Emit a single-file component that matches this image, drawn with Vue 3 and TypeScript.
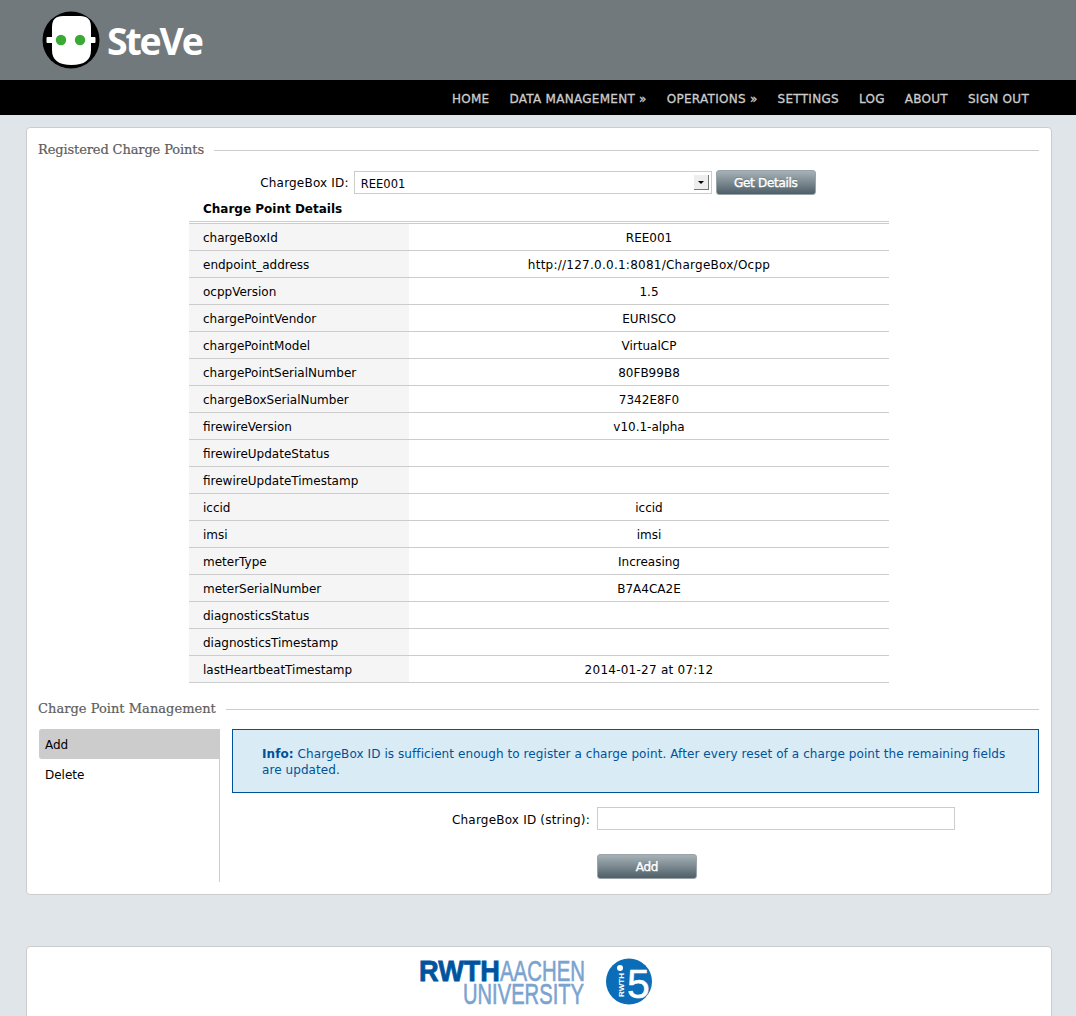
<script setup lang="ts">
const navItems = ['HOME', 'DATA MANAGEMENT »', 'OPERATIONS »', 'SETTINGS', 'LOG', 'ABOUT', 'SIGN OUT']

const details: [string, string][] = [
  ['chargeBoxId', 'REE001'],
  ['endpoint_address', 'http://127.0.0.1:8081/ChargeBox/Ocpp'],
  ['ocppVersion', '1.5'],
  ['chargePointVendor', 'EURISCO'],
  ['chargePointModel', 'VirtualCP'],
  ['chargePointSerialNumber', '80FB99B8'],
  ['chargeBoxSerialNumber', '7342E8F0'],
  ['firewireVersion', 'v10.1-alpha'],
  ['firewireUpdateStatus', ''],
  ['firewireUpdateTimestamp', ''],
  ['iccid', 'iccid'],
  ['imsi', 'imsi'],
  ['meterType', 'Increasing'],
  ['meterSerialNumber', 'B7A4CA2E'],
  ['diagnosticsStatus', ''],
  ['diagnosticsTimestamp', ''],
  ['lastHeartbeatTimestamp', '2014-01-27 at 07:12'],
]
</script>

<template>
  <div class="page">
    <header class="top">
      <svg class="logo" width="60" height="60" viewBox="0 0 60 60">
        <circle cx="30" cy="30" r="28.5" fill="#000" />
        <path d="M11 17 Q11 6 22 6 H39 Q50 6 50 17 V40 Q50 55 30.5 55 Q11 55 11 40 Z" fill="#fff" />
        <rect x="5.5" y="27" width="49" height="6" rx="1" fill="#fff" />
        <circle cx="20" cy="30" r="5.2" fill="#3aaa35" />
        <circle cx="39" cy="30" r="5.2" fill="#3aaa35" />
      </svg>
      <span class="brand">SteVe</span>
    </header>
    <nav class="menu">
      <a v-for="item in navItems" :key="item">{{ item }}</a>
    </nav>

    <main class="card">
      <div class="section-title"><span>Registered Charge Points</span></div>
      <form class="picker" @submit.prevent>
        <label>ChargeBox ID:</label>
        <div class="select-wrap">
          <select><option>REE001</option></select>
          <span class="select-arrow"></span>
        </div>
        <button class="btn" type="button">Get Details</button>
      </form>

      <table class="details">
        <thead>
          <tr><th colspan="2">Charge Point Details</th></tr>
        </thead>
        <tbody>
          <tr v-for="row in details" :key="row[0]">
            <td class="key">{{ row[0] }}</td>
            <td class="val" :class="{ wide: row[1].length > 15 }">{{ row[1] }}</td>
          </tr>
        </tbody>
      </table>

      <div class="section-title second"><span>Charge Point Management</span></div>
      <div class="manage">
        <ul class="side">
          <li class="active">Add</li>
          <li>Delete</li>
        </ul>
        <div class="manage-body">
          <div class="info">
            <b>Info:</b> ChargeBox ID is sufficient enough to register a charge point. After every reset of a charge point the remaining fields are updated.
          </div>
          <form class="add-form" @submit.prevent>
            <label>ChargeBox ID (string):</label>
            <input type="text" />
            <button class="btn" type="button">Add</button>
          </form>
        </div>
      </div>
    </main>

    <footer class="card foot">
      <svg width="240" height="52" viewBox="0 0 240 52">
        <text x="0" y="26" class="rwth" textLength="81" lengthAdjust="spacingAndGlyphs">RWTH</text>
        <text x="81" y="26" class="aachen" textLength="85" lengthAdjust="spacingAndGlyphs">AACHEN</text>
        <text x="44" y="49" class="aachen" textLength="121" lengthAdjust="spacingAndGlyphs">UNIVERSITY</text>
        <circle cx="210" cy="26.5" r="23" fill="#0b6db7" />
        <circle cx="201" cy="13" r="3" fill="#fff" />
        <text x="0" y="0" class="tiny" textLength="24" lengthAdjust="spacingAndGlyphs" transform="translate(205 42) rotate(-90)">RWTH</text>
        <text x="208" y="43" class="five">5</text>
      </svg>
    </footer>
  </div>
</template>

<style>
html, body {
  margin: 0;
  background: #e0e5e9;
  overflow: hidden;
}
</style>

<style scoped>
.page {
  font-family: 'DejaVu Sans', Verdana, sans-serif;
  font-size: 12px;
  color: #000;
  height: 1016px;
  overflow: hidden;
}

.top {
  height: 80px;
  background: #72797c;
  display: flex;
  align-items: center;
  padding-left: 41px;
  box-sizing: border-box;
}
.logo { flex: none; }
.brand {
  font-family: 'Open Sans', sans-serif;
  font-weight: 700;
  font-size: 37.5px;
  color: #fff;
  letter-spacing: -2.2px;
  margin-left: 6px;
}

.menu {
  height: 35px;
  background: #000;
  display: flex;
  justify-content: flex-end;
  align-items: center;
  gap: 20px;
  padding-right: 47px;
  padding-top: 2px;
  box-sizing: border-box;
}
.menu a {
  color: #ccc;
  font-size: 12px;
  letter-spacing: 0.28px;
  -webkit-text-stroke: 0.3px #ccc;
}

.card {
  display: block;
  margin: 12px 24px 0 26px;
  background: #fff;
  border: 1px solid #ccc;
  border-radius: 4px;
  padding: 12px;
  height: 768px;
  box-sizing: border-box;
}

.section-title {
  display: flex;
  align-items: center;
  gap: 10px;
  margin-left: -1px;
  font-family: 'DejaVu Serif', serif;
  font-size: 13px;
  letter-spacing: -0.12px;
  color: #5d5d5d;
  -webkit-text-stroke: 0.2px #5d5d5d;
  line-height: 20px;
}
.section-title::after {
  content: '';
  flex: 1;
  border-top: 1px solid #ccc;
}
.section-title.second {
  margin-top: 16px;
  letter-spacing: 0.03px;
}

.picker {
  display: flex;
  justify-content: center;
  align-items: center;
  gap: 5px;
  margin-top: 10px;
  padding-right: 2px;
}
.picker label, .add-form label { letter-spacing: 0.2px; }
.picker .btn { margin-left: -1px; }
.select-wrap { position: relative; }
.select-wrap select {
  display: block;
  appearance: none;
  width: 358px;
  height: 23px;
  box-sizing: border-box;
  border: 1px solid #ccc;
  background: #fff;
  font: inherit;
  font-size: 11.5px;
  padding: 2px 6px 0;
  color: #000;
  border-radius: 0;
}
.select-arrow {
  position: absolute;
  right: 3px;
  top: 4px;
  width: 15px;
  height: 15px;
  box-sizing: border-box;
  background: #eee;
  border-right: 1px solid #777;
  border-bottom: 1px solid #777;
}
.select-arrow::after {
  content: '';
  position: absolute;
  left: 4px;
  top: 6px;
  border: 3px solid transparent;
  border-top: 3px solid #000;
  border-bottom: 0;
}

.btn {
  width: 100px;
  height: 25px;
  box-sizing: border-box;
  border: 1px solid #9aa3a8;
  border-radius: 3px;
  background: linear-gradient(#a6b2b8, #4f5f67);
  color: #fff;
  font: inherit;
  letter-spacing: -0.3px;
  -webkit-text-stroke: 0.4px #fff;
  text-shadow: 0 -1px 0 rgba(0, 0, 0, 0.25);
  padding: 0;
}

.details {
  width: 700px;
  margin: 0 auto;
  border-collapse: collapse;
}
.details th {
  text-align: left;
  padding: 2px 14px 0;
  height: 24px;
  font-size: 12px;
  border-bottom: 3px double #ccc;
}
.details td {
  height: 27px;
  padding: 2px 0 0;
  box-sizing: border-box;
  border-bottom: 1px solid #ccc;
}
.details tbody tr:first-child td { height: 28px; }
.key {
  width: 220px;
  padding-left: 14px !important;
  background: #f5f5f5;
}
.val { text-align: center; }
.val.wide { letter-spacing: 0.25px; }

.manage {
  display: flex;
  margin-top: 10px;
  gap: 12px;
}
.side {
  list-style: none;
  margin: 0;
  padding: 0;
  width: 181px;
  height: 153px;
  box-sizing: border-box;
  border-right: 1px solid #ccc;
}
.side li {
  height: 30px;
  line-height: 32px;
  padding-left: 6px;
}
.side li.active {
  background: #ccc;
  border-radius: 3px 0 0 3px;
}
.manage-body { flex: 1; }
.info {
  border: 1px solid #00529b;
  background: #d9ebf4;
  color: #00529b;
  padding: 16px 30px 14px 29px;
  line-height: 16px;
  letter-spacing: 0.08px;
}
.add-form {
  display: grid;
  grid-template-columns: 1fr 358px;
  column-gap: 7px;
  row-gap: 24px;
  align-items: center;
  margin-top: 14px;
  padding-right: 84px;
}
.add-form label { text-align: right; padding-top: 2px; }
.add-form input {
  height: 23px;
  box-sizing: border-box;
  border: 1px solid #ccc;
  padding: 0 6px;
}
.add-form .btn { grid-column: 2; }

.foot {
  margin-top: 51px;
  height: 80px;
  padding: 8px 0 0;
  display: flex;
  justify-content: center;
  align-items: flex-start;
}
.rwth {
  font-family: 'Liberation Sans', sans-serif;
  font-weight: 700;
  font-size: 29px;
  fill: #00549f;
  stroke: #00549f;
  stroke-width: 0.8px;
}
.aachen {
  font-family: 'Liberation Sans', sans-serif;
  font-size: 29px;
  fill: #7ba3d0;
  stroke: #7ba3d0;
  stroke-width: 0.6px;
}
.tiny { font-family: 'Liberation Sans', sans-serif; font-weight: 700; font-size: 8px; fill: #fff; }
.five {
  font-family: 'Liberation Sans', sans-serif;
  font-size: 41px;
  fill: #fff;
  stroke: #fff;
  stroke-width: 0.5px;
}
</style>
